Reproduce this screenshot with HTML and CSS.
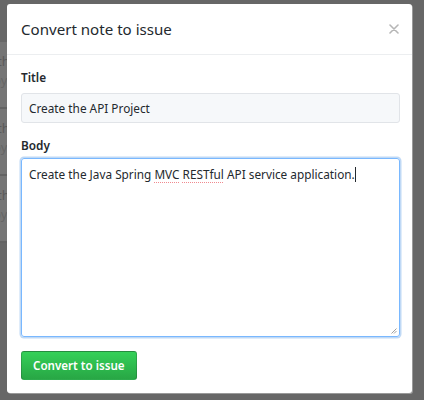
FILE: index.html
```html
<!DOCTYPE html>
<html>
<head>
<meta charset="utf-8">
<link rel="stylesheet" href="styles.css">
</head>
<body>
<div class="page">
  <div class="column">
    <div class="card-row"><span class="t1">th</span><span class="t2">by</span></div>
    <div class="card-row"><span class="t1">th</span><span class="t2">by</span></div>
    <div class="card-row"><span class="t1">th</span><span class="t2">by</span></div>
  </div>
</div>
<div class="overlay"></div>
<div class="modal">
  <div class="modal-header">
    <h2 class="modal-title">Convert note to issue</h2>
    <span class="close">
      <svg width="10" height="10" viewBox="0 0 10 10"><path d="M1 1L9 9M9 1L1 9" stroke="#b6b6b6" stroke-width="1.6" stroke-linecap="round"/></svg>
    </span>
  </div>
  <div class="modal-body">
    <label class="label">Title</label>
    <div class="input">Create the API Project</div>
    <label class="label label-body">Body</label>
    <div class="textarea">
      <span>Create the Java Spring <span class="spell">MVC</span> <span class="spell">RESTful</span> API service application.</span><span class="caret"></span>
      <svg class="grip" width="6" height="6" viewBox="0 0 6 6"><path d="M5.5 0.5L0.5 5.5M5.5 3L3 5.5" stroke="#888" stroke-width="0.8"/></svg>
    </div>
    <div class="actions"><button class="btn">Convert to issue</button></div>
  </div>
</div>
</body>
</html>
```
FILE: styles.css
```css
html, body {
  margin: 0;
  padding: 0;
  width: 424px;
  height: 400px;
  overflow: hidden;
  background: #6c6c6c;
  font-family: "Noto Sans", "Open Sans", sans-serif;
}
.page {
  display: flex;
  align-items: flex-start;
  padding-top: 42px;
}
.column {
  width: 30px;
  background: #7a7a7a;
  display: flex;
  flex-direction: column;
}
.card-row {
  height: 67px;
  border-bottom: 2px solid #686868;
  display: flex;
  flex-direction: column;
  padding: 10px 0 0 0;
  box-sizing: border-box;
  color: #5e5e5e;
  font-size: 13px;
  line-height: 19px;
  margin-left: -3px;
}
.t2 { color: #6a6a6a; margin-left: -4px; }
.overlay {
  position: absolute;
  left: 0; top: 0; right: 0; bottom: 0;
  background: rgba(0,0,0,0.04);
}
.modal {
  position: absolute;
  left: 7px;
  top: 4px;
  width: 405px;
  height: 389px;
  background: #fff;
  border-radius: 3px;
  box-shadow: 1px 1px 0 #9a9a9a;
  display: flex;
  flex-direction: column;
}
.modal-header {
  height: 50px;
  border-bottom: 1px solid #eceef0;
  display: flex;
  align-items: center;
  justify-content: space-between;
  padding: 0 13px 0 14px;
}
.modal-title {
  margin: 0;
  font-size: 15.1px;
  font-weight: 400;
  color: #24292e;
}
.close {
  display: flex;
  width: 10px;
  height: 10px;
}
.modal-body {
  padding: 14px 12px 0 14px;
  display: flex;
  flex-direction: column;
}
.label {
  font-size: 11.8px;
  font-weight: 600;
  color: #24292e;
  line-height: 17px;
  margin-bottom: 7px;
}
.label-body { margin-bottom: 4px; }
.input {
  height: 30px;
  box-sizing: border-box;
  background: #f6f8fa;
  border: 1px solid #e1e4e8;
  border-radius: 3px;
  padding: 0 7px;
  font-size: 11.8px;
  color: #24292e;
  display: flex;
  align-items: center;
  margin-bottom: 14px;
}
.textarea {
  position: relative;
  height: 179px;
  box-sizing: border-box;
  border: 1px solid #79b8ff;
  box-shadow: 0 0 0 1.5px rgba(3,102,214,0.25);
  border-radius: 3px;
  padding: 6px 7px;
  font-size: 11.8px;
  line-height: 18px;
  color: #24292e;
  margin-bottom: 14px;
}
.spell {
  text-decoration: underline dotted #f08a8f;
  text-decoration-thickness: 1px;
  text-underline-offset: 3px;
}
.caret {
  display: inline-block;
  width: 1px;
  height: 15px;
  background: #24292e;
  vertical-align: -3px;
}
.grip {
  position: absolute;
  right: 2px;
  bottom: 2px;
}
.actions { display: flex; }
.btn {
  height: 29px;
  padding: 0 11px;
  border: 1px solid rgba(27,31,35,0.2);
  border-radius: 3px;
  background: linear-gradient(#34d058, #28a745);
  color: #fff;
  font-family: "Noto Sans", "Open Sans", sans-serif;
  font-size: 11.6px;
  font-weight: 600;
}
```
